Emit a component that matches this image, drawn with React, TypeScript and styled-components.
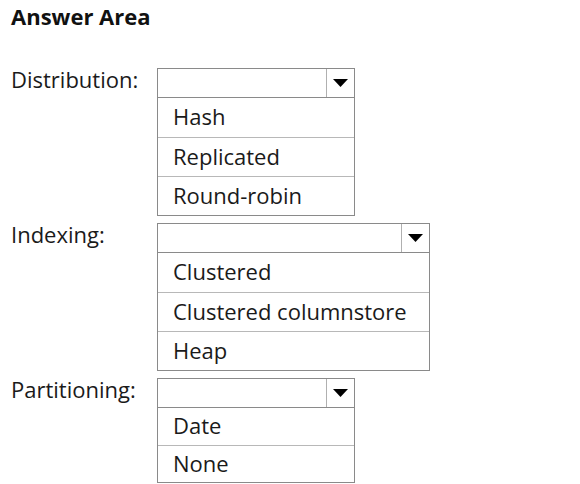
import React from "react";
import styled, { createGlobalStyle } from "styled-components";

const GlobalStyle = createGlobalStyle`
	body {
		margin: 0;
		background: #ffffff;
		font-family: "Open Sans", "Liberation Sans", sans-serif;
		color: #1a1a1a;
	}
`;

const Page = styled.div`
	width: 580px;
	height: 484px;
	padding: 2px 0 0 11px;
	box-sizing: border-box;
	display: flex;
	flex-direction: column;
`;

const Title = styled.div`
	font-size: 22px;
	font-weight: 700;
	line-height: 28px;
	margin-bottom: 38px;
	color: #111;
`;

const Section = styled.div`
	display: flex;
	align-items: flex-start;
	& + & {
		margin-top: 7px;
	}
`;

const Label = styled.div`
	width: 146px;
	font-size: 22px;
	line-height: 30px;
	margin-top: -4px;
`;

const Dropdown = styled.div<{ $width: number }>`
	width: ${props => props.$width}px;
	display: flex;
	flex-direction: column;
`;

const Header = styled.div`
	height: 30px;
	box-sizing: border-box;
	border: 1px solid #8a8a8a;
	display: flex;
`;

const Field = styled.div`
	flex: 1;
`;

const ArrowCell = styled.div`
	width: 27px;
	border-left: 1px solid #b0b0b0;
	display: flex;
	align-items: center;
	justify-content: center;
`;

const OptionList = styled.div`
	border: 1px solid #8a8a8a;
	border-top: none;
`;

const Option = styled.div<{ $height: number }>`
	height: ${props => props.$height}px;
	box-sizing: border-box;
	padding: 0 0 3px 15px;
	font-size: 22px;
	display: flex;
	align-items: center;
	& + & {
		border-top: 1px solid #b8b8b8;
	}
`;

const Arrow = () => (
	<svg width="15" height="8" viewBox="0 0 15 8">
		<polygon points="0,0 15,0 7.5,8" fill="#000" />
	</svg>
);

interface IChoice {
	label: string
	width: number
	rowHeight: number
	options: string[]
}

const choices: IChoice[] = [
	{ label: "Distribution:", width: 198, rowHeight: 39, options: ["Hash", "Replicated", "Round-robin"] },
	{ label: "Indexing:", width: 273, rowHeight: 39, options: ["Clustered", "Clustered columnstore", "Heap"] },
	{ label: "Partitioning:", width: 198, rowHeight: 37, options: ["Date", "None"] }
];

const App = () => (
	<>
		<GlobalStyle />
		<Page>
			<Title>Answer Area</Title>
			{choices.map(choice => (
				<Section key={choice.label}>
					<Label>{choice.label}</Label>
					<Dropdown $width={choice.width}>
						<Header>
							<Field />
							<ArrowCell>
								<Arrow />
							</ArrowCell>
						</Header>
						<OptionList>
							{choice.options.map(option => (
								<Option key={option} $height={choice.rowHeight}>{option}</Option>
							))}
						</OptionList>
					</Dropdown>
				</Section>
			))}
		</Page>
	</>
);

export default App;
